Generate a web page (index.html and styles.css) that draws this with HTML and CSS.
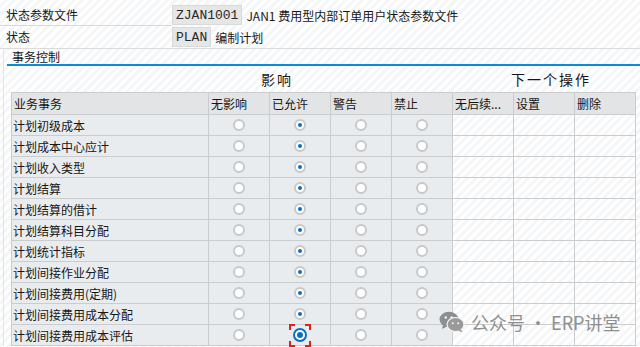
FILE: index.html
```html
<!DOCTYPE html>
<html lang="zh-CN">
<head>
    <meta charset="UTF-8">
    <meta name="viewport" content="width=device-width, initial-scale=1.0">
    <title>状态参数文件</title>
    <link rel="stylesheet" href="styles.css">
</head>
<body>

    <div class="field-row first">
        <span class="field-label">状态参数文件</span>
        <span class="field-box">ZJAN1001</span>
        <span class="field-text">JAN1 费用型内部订单用户状态参数文件</span>
    </div>
    <div class="field-row second">
        <span class="field-label">状态</span>
        <span class="field-box">PLAN</span>
        <span class="field-text">编制计划</span>
    </div>

    <!-- 事务控制 -->
    <div class="group">
        <div class="group-title">事务控制</div>
        <div class="col-groups">
            <span class="cg-effect">影响</span>
            <span class="cg-next">下一个操作</span>
        </div>
        <div class="grid" id="grid">
            <div class="hcell">业务事务</div>
            <div class="hcell">无影响</div>
            <div class="hcell">已允许</div>
            <div class="hcell">警告</div>
            <div class="hcell">禁止</div>
            <div class="hcell">无后续...</div>
            <div class="hcell">设置</div>
            <div class="hcell">删除</div>
        </div>
    </div>

    <div class="watermark">
        <svg class="wm-icon" width="26" height="22" viewBox="0 0 26 22">
            <ellipse cx="10" cy="8.5" rx="9.5" ry="7.8" fill="#8e8e8e"/>
            <path d="M4 14 L3 18 L8 15.5 Z" fill="#8e8e8e"/>
            <ellipse cx="16.5" cy="13.5" rx="8.5" ry="7" fill="#9a9a9a" stroke="#f4f5f7" stroke-width="1.2"/>
            <path d="M22 18.5 L23.5 21.5 L19 19.5 Z" fill="#9a9a9a"/>
            <circle cx="6.8" cy="6.5" r="1.2" fill="#f4f5f7"/>
            <circle cx="12.6" cy="6.5" r="1.2" fill="#f4f5f7"/>
            <circle cx="13.8" cy="12.3" r="1" fill="#f4f5f7"/>
            <circle cx="19.2" cy="12.3" r="1" fill="#f4f5f7"/>
        </svg>
        <span>公众号 · ERP讲堂</span>
    </div>

    <script>
        // 业务事务列表
        const rows = [
            '计划初级成本', '计划成本中心应计', '计划收入类型', '计划结算',
            '计划结算的借计', '计划结算科目分配', '计划统计指标', '计划间接作业分配',
            '计划间接费用(定期)', '计划间接费用成本分配', '计划间接费用成本评估'
        ];

        const grid = document.getElementById('grid');
        let html = '';
        rows.forEach(function (name, i) {
            const focus = i === rows.length - 1;
            html += '<div class="cell name">' + name + '</div>';
            html += '<div class="cell"><span class="radio"></span></div>';
            if (focus) {
                html += '<div class="cell"><span class="focus">' +
                    '<svg width="22" height="23" viewBox="0 0 22 23" fill="none" stroke="#e0211b" stroke-width="2">' +
                    '<path d="M1 6V1H6M16 1H21V6M21 17V22H16M6 22H1V17"/></svg>' +
                    '<span class="radio on active"></span></span></div>';
            } else {
                html += '<div class="cell"><span class="radio on"></span></div>';
            }
            html += '<div class="cell"><span class="radio"></span></div>';
            html += '<div class="cell"><span class="radio"></span></div>';
            html += '<div class="cell free"></div><div class="cell free"></div><div class="cell free"></div>';
        });
        grid.insertAdjacentHTML('beforeend', html);
    </script>
</body>
</html>
```

FILE: styles.css
```css
body {
    margin: 0;
    height: 347px;
    overflow: hidden;
    position: relative;
    font-family: "Noto Sans CJK SC", "Liberation Sans", sans-serif;
    font-size: 12px;
    color: #161616;
    background: repeating-linear-gradient(135deg, #ffffff 0 3px, #f5f6f8 3px 6px);
}

.field-row {
    display: flex;
    align-items: center;
    height: 22px;
}

.field-row.first {
    margin-top: 4px;
}

.field-row.second {
    border-bottom: 1px solid #dadbdd;
}

.field-label {
    box-sizing: border-box;
    width: 172px;
    padding-left: 6px;
    line-height: 20px;
}

.field-row.first .field-label {
    border-bottom: 1px solid #d7d8da;
}

.field-box {
    box-sizing: border-box;
    height: 20px;
    padding: 0 3px;
    font-family: "Liberation Mono", monospace;
    font-size: 13px;
    line-height: 19px;
    color: #2a2a2a;
    background-color: #e6e6e6;
    border: 1px solid #d9d9d9;
}

.field-text {
    margin-left: 4px;
}

.group {
    margin-left: 3px;
    border-left: 1px solid #e1e3e6;
}

.group-title {
    margin-left: 3px;
    padding-left: 5px;
    padding-top: 1px;
    line-height: 14px;
    border-bottom: 2px solid #0a8bd6;
}

.col-groups {
    display: flex;
    align-items: center;
    height: 26px;
    font-size: 14px;
    letter-spacing: 2px;
}

.cg-effect {
    margin-left: 257px;
    width: 250px;
}

.grid {
    display: grid;
    grid-template-columns: 196px repeat(7, 60px);
    grid-template-rows: 21px;
    grid-auto-rows: 20px;
    gap: 1px;
    padding: 1px;
    margin-left: 7px;
    width: max-content;
    background-color: #cbcccd;
}

.hcell {
    padding-left: 2px;
    line-height: 21px;
    white-space: nowrap;
    overflow: hidden;
    background-color: #e3e4e5;
}

.cell {
    display: flex;
    align-items: center;
    justify-content: center;
    background-color: #e9ecef;
}

.cell.name {
    justify-content: flex-start;
    padding-left: 1px;
    white-space: nowrap;
}

.cell.free {
    background: repeating-linear-gradient(135deg, #ffffff 0 3px, #f5f6f8 3px 6px);
}

.radio {
    box-sizing: border-box;
    width: 12px;
    height: 12px;
    border: 2px solid #c7c8ca;
    border-radius: 50%;
    background-color: #fff;
    display: flex;
    align-items: center;
    justify-content: center;
}

.radio.on::after {
    content: "";
    width: 4px;
    height: 4px;
    border-radius: 50%;
    background-color: #0a6fc2;
}

.radio.active {
    width: 14px;
    height: 14px;
    border-color: #0a6fc2;
}

.radio.active::after {
    width: 6px;
    height: 6px;
}

.focus {
    position: relative;
    width: 22px;
    height: 23px;
    display: flex;
    align-items: center;
    justify-content: center;
}

.focus svg {
    position: absolute;
    left: 0;
    top: 0;
}

.watermark {
    position: absolute;
    left: 439px;
    top: 309px;
    display: flex;
    align-items: center;
    gap: 6px;
    font-size: 18px;
    color: #8f8f8f;
}
```
